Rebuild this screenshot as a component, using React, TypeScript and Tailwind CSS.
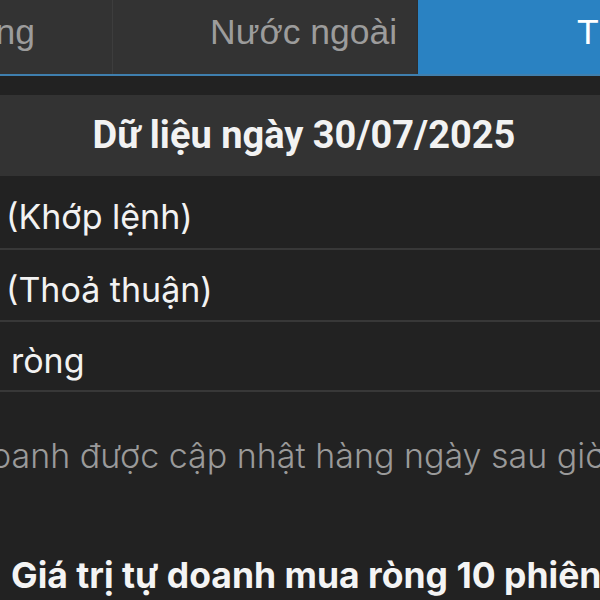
const rows = ["(Khớp lệnh)", "(Thoả thuận)", "ròng"];

export default function App() {
  return (
    <div className="w-[600px] h-[600px] overflow-hidden bg-[#222222]" style={{ fontFamily: "Inter, 'Noto Sans', sans-serif" }}>
      {/* tab bar */}
      <div className="flex h-[76px] border-b-2 border-[#3f7fae] bg-[#333333]">
        <div className="w-[113px] shrink-0 overflow-hidden flex justify-end items-center pr-[77px] pb-[8px] border-r border-[#3d3d3d]">
          <span className="whitespace-nowrap text-[35.5px] text-[#9c9c9c]" style={{ fontFamily: "'Liberation Sans', Arial, sans-serif" }}>Thị trường</span>
        </div>
        <div className="w-[305px] shrink-0 flex items-center pl-[97px] pb-[8px] border-r border-[#2f2f2f]">
          <span className="whitespace-nowrap text-[35.5px] text-[#9c9c9c]" style={{ fontFamily: "'Liberation Sans', Arial, sans-serif" }}>Nước ngoài</span>
        </div>
        <div className="flex-1 overflow-hidden flex items-center pl-[159px] pb-[8px] bg-[#2a82c2]">
          <span className="whitespace-nowrap text-[35.5px] text-white" style={{ fontFamily: "'Liberation Sans', Arial, sans-serif" }}>Tự doanh</span>
        </div>
      </div>

      {/* date header */}
      <div className="mt-[19px] h-[81px] bg-[#333333] flex items-center justify-center pl-[8px]">
        <span className="text-[38px] font-bold text-[#f2f2f2] whitespace-nowrap" style={{ fontFamily: "Roboto, sans-serif" }}>Dữ liệu ngày 30/07/2025</span>
      </div>

      {/* rows */}
      {rows.map((r, i) => (
        <div key={i} className={"flex items-center pt-[8px] border-b-2 border-[#383838] " + (i === 0 ? "h-[74px] pl-[6px]" : i === 1 ? "h-[72px] pl-[6px]" : "h-[70px] pl-[11px]")}>
          <span className="text-[34px] text-[#f2f2f2] whitespace-pre">{r}</span>
        </div>
      ))}

      {/* note */}
      <div className="mt-[38px] -ml-[9px] whitespace-nowrap text-[34px] font-light text-[#9a9a9a]">
        oanh được cập nhật hàng ngày sau giờ giao dịch
      </div>

      {/* section title */}
      <div className="mt-[68px] pl-[11px] whitespace-nowrap text-[35.5px] font-bold text-[#f4f4f4]">
        Giá trị tự doanh mua ròng 10 phiên gần nhất
      </div>
    </div>
  );
}
